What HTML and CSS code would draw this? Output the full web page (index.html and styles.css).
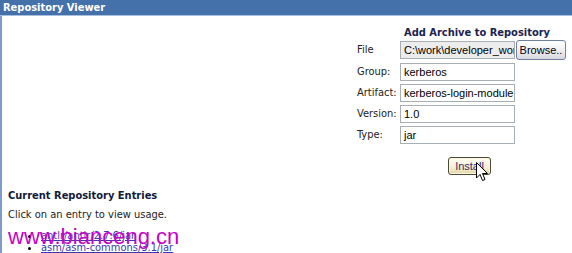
FILE: index.html
```html
<!DOCTYPE html>
<html>
<head>
<meta charset="utf-8">
<link rel="stylesheet" href="styles.css">
</head>
<body>
<div class="page">
  <div class="header">Repository Viewer</div>
  <div class="content">
    <div class="formwrap">
      <form class="archive">
        <div class="title">Add Archive to Repository</div>
        <div class="grid">
          <label class="lbl file-lbl">File</label>
          <div class="filefield">
            <span class="input file-input">C:\work\developer_work</span>
            <span class="browse">Browse..</span>
          </div>
          <label class="lbl">Group:</label>
          <span class="input">kerberos</span>
          <label class="lbl">Artifact:</label>
          <span class="input">kerberos-login-module</span>
          <label class="lbl">Version:</label>
          <span class="input">1.0</span>
          <label class="lbl">Type:</label>
          <span class="input">jar</span>
        </div>
        <div class="actions">
          <span class="install">Install</span>
          <svg class="cursor" width="13" height="20" viewBox="0 0 13 20">
            <path d="M0.5 0.5 L0.5 16 L4 12.5 L6.5 18.5 L9 17.5 L6.5 11.5 L11.5 11.5 Z" fill="#fff" stroke="#000" stroke-width="1" stroke-linejoin="miter"/>
          </svg>
        </div>
      </form>
    </div>
    <div class="entries">
      <h2 class="entries-title">Current Repository Entries</h2>
      <p class="hint">Click on an entry to view usage.</p>
      <ul class="list">
        <li><a href="#">antlr/antlr/2.7.6/jar</a></li>
        <li><a href="#">asm/asm-commons/3.1/jar</a></li>
      </ul>
    </div>
    <div class="watermark">www.bianceng.cn</div>
  </div>
</div>
</body>
</html>
```
FILE: styles.css
```css
html, body {
  margin: 0;
  padding: 0;
  background: #fff;
}
body {
  font-family: "DejaVu Sans Condensed", "DejaVu Sans", sans-serif;
  font-size: 11px;
  color: #000;
  overflow: hidden;
}
.page {
  width: 572px;
  height: 253px;
  overflow: hidden;
}
.header {
  height: 15px;
  background: #4571aa;
  border-bottom: 1px solid #a9c0dc;
  color: #fff;
  font-weight: bold;
  font-size: 11px;
  line-height: 15px;
  padding-left: 3px;
}
.content {
  position: relative;
  border-left: 2px solid #7f9cc8;
  height: 237px;
}
.formwrap {
  display: flex;
  justify-content: flex-end;
  padding-right: 7px;
}
.archive {
  width: 208px;
  margin: 0;
  padding-top: 10px;
}
.title {
  font-weight: bold;
  color: #1a2250;
  line-height: 14px;
  padding-left: 47px;
}
.grid {
  display: grid;
  grid-template-columns: 43px auto;
  grid-template-rows: 20px 18px 18px 18px 18px;
  row-gap: 3px;
  align-items: center;
}
.lbl {
  color: #222;
  line-height: 14px;
}
.filefield {
  display: flex;
  align-items: center;
  height: 20px;
}
.input {
  box-sizing: border-box;
  display: block;
  width: 115px;
  height: 18px;
  border: 1px solid #a7aeb4;
  background: #fff;
  font-family: "Liberation Sans", Arial, sans-serif;
  font-size: 11px;
  line-height: 16px;
  padding-left: 3px;
  white-space: nowrap;
  overflow: hidden;
  color: #000;
}
.file-input {
  background: #ececec;
}
.browse {
  box-sizing: border-box;
  height: 20px;
  width: 50px;
  margin-left: 1px;
  border: 1px solid #6f7f9f;
  border-radius: 3px;
  background: linear-gradient(#ffffff, #ecebf0 60%, #d8d8e0);
  font-family: "Liberation Sans", Arial, sans-serif;
  font-size: 11px;
  line-height: 18px;
  text-align: center;
  color: #000;
  white-space: nowrap;
}
.actions {
  position: relative;
  margin-top: 13px;
  padding-left: 91px;
  height: 18px;
}
.install {
  box-sizing: border-box;
  display: inline-block;
  width: 43px;
  height: 18px;
  border: 1px solid #4a4a3a;
  border-radius: 3px;
  background: linear-gradient(#fffef6, #f6efd2 60%, #e2d6a4);
  box-shadow: inset 0 0 0 1px #fff6da;
  font-family: "Liberation Sans", Arial, sans-serif;
  font-size: 11px;
  line-height: 16px;
  text-align: center;
  color: #352a6a;
}
.cursor {
  position: absolute;
  left: 119px;
  top: 5px;
}
.entries {
  padding-left: 6px;
  margin-top: 14px;
}
.entries-title {
  font-size: 11px;
  font-weight: bold;
  color: #111a3a;
  line-height: 14px;
  margin: 0;
}
.hint {
  margin: 5px 0 0 0;
  line-height: 14px;
  color: #222;
}
.list {
  margin: 8px 0 0 0;
  padding-left: 33px;
  line-height: 12px;
}
.list li a {
  color: #3a3aa8;
  text-decoration: underline;
}
.watermark {
  position: absolute;
  left: 6px;
  top: 209px;
  font-family: "Liberation Sans", Arial, sans-serif;
  font-size: 22px;
  line-height: 24px;
  color: #c800c8;
  white-space: nowrap;
}
```
